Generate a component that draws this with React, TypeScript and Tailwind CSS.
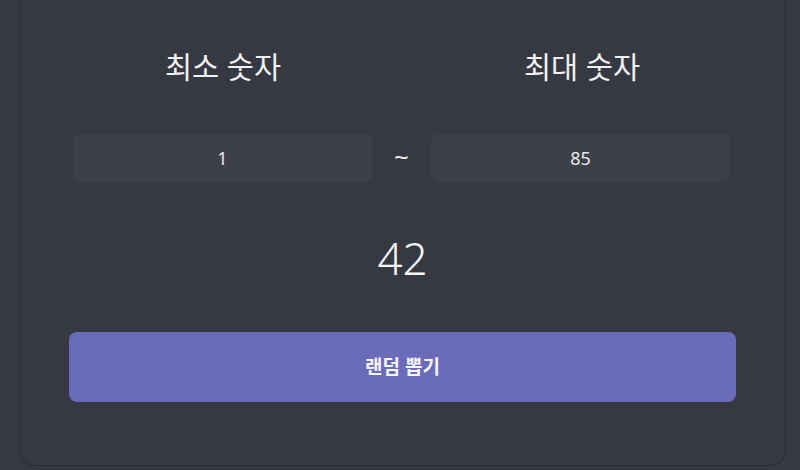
import React, { useState } from 'react';

const font = { fontFamily: '"Noto Sans", "Noto Sans CJK KR", sans-serif' };

const App: React.FC = () => {
  const [min, setMin] = useState('1');
  const [max, setMax] = useState('85');
  const [result, setResult] = useState(42);

  const handlePick = () => {
    const lo = parseInt(min, 10) || 0;
    const hi = parseInt(max, 10) || 0;
    setResult(Math.floor(Math.random() * (hi - lo + 1)) + lo);
  };

  return (
    <div className="w-[800px] h-[470px] bg-[#363842] overflow-hidden antialiased" style={font}>
      <div className="ml-[19px] w-[767px] h-[466px] border-x border-b border-[#2b2d34] rounded-b-2xl px-[49px] pt-[49px] flex flex-col">
        {/* Labels */}
        <div className="grid grid-cols-[1fr_59px_1fr] px-1">
          <span className="text-center text-[29.5px] leading-[36px] text-[#f2f2f4]">최소 숫자</span>
          <span />
          <span className="text-center text-[29.5px] leading-[36px] text-[#f2f2f4]">최대 숫자</span>
        </div>

        {/* Inputs */}
        <div className="mt-[49px] grid grid-cols-[1fr_59px_1fr] items-center pl-1 pr-[6px]">
          <input
            value={min}
            onChange={(e) => setMin(e.target.value)}
            className="h-12 w-full rounded-lg bg-[#3e4049] text-center text-[18px] text-[#e8e8ea] outline-none"
          />
          <span className="text-center text-[26px] leading-none text-[#ececee] -mt-1">~</span>
          <input
            value={max}
            onChange={(e) => setMax(e.target.value)}
            className="h-12 w-full rounded-lg bg-[#3e4049] text-center text-[18px] text-[#e8e8ea] outline-none"
          />
        </div>

        {/* Result */}
        <div className="mt-[51px] h-[50px] flex items-center justify-center text-[44px] font-light text-[#f5f5f7] leading-none">
          {result}
        </div>

        {/* Action */}
        <button
          onClick={handlePick}
          className="mt-[49px] h-[70px] w-full rounded-lg bg-[#6b6cb9] text-[19px] font-bold text-[#f5f5fa]"
        >
          랜덤 뽑기
        </button>
      </div>
    </div>
  );
};

export default App;
